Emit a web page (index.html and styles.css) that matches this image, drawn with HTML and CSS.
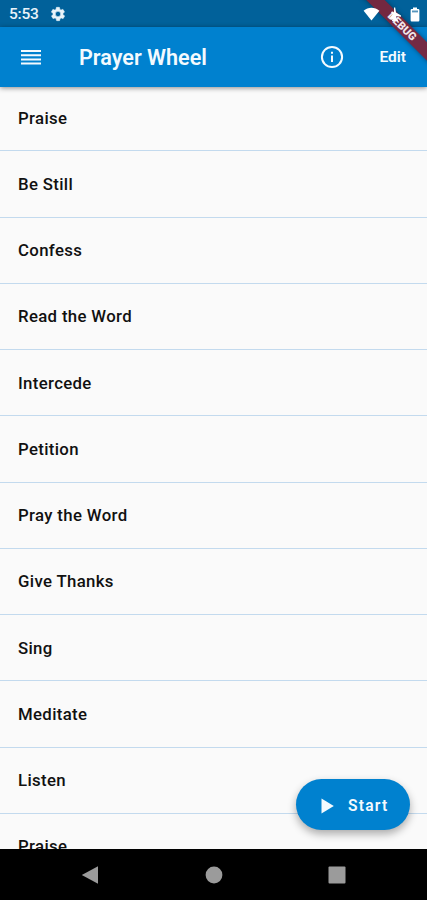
FILE: index.html
```
<!DOCTYPE html>
<html lang="en">
<head>
  <meta charset="UTF-8" />
  <meta name="viewport" content="width=device-width, initial-scale=1.0"/>
  <title>Prayer Wheel</title>
  <link rel="stylesheet" href="styles.css">
</head>
<body>

  <div class="screen">
    <!-- Status bar -->
    <div class="status-bar">
      <span class="clock">5:53</span>
      <svg class="gear" width="16" height="16" viewBox="0 0 24 24" fill="currentColor" stroke="currentColor" stroke-width=".8">
        <path fill-rule="evenodd" d="M19.4 13c.1-.3.1-.7.1-1s0-.7-.1-1l2.100-1.600c.2-.2.2-.4.100-.6l-2-3.500c-.1-.2-.4-.3-.6-.2l-2.500 1c-.5-.4-1.100-.7-1.700-1l-.4-2.600c0-.3-.2-.5-.5-.5h-4c-.2 0-.5.2-.5.4l-.4 2.700c-.6.200-1.100.600-1.700 1l-2.500-1c-.2-.1-.5 0-.6.2l-2 3.500c-.1.200-.1.500.1.600L4.600 11c-.1.300-.1.700-.1 1s0 .7.100 1l-2.100 1.600c-.2.200-.2.400-.1.600l2 3.500c.1.200.4.300.6.200l2.500-1c.5.400 1.100.700 1.700 1l.4 2.600c0 .3.300.5.500.5h4c.2 0 .5-.2.500-.4l.4-2.700c.6-.2 1.100-.6 1.700-1l2.500 1c.2.100.5 0 .6-.2l2-3.500c.1-.2.100-.5-.1-.6zM12 8a4 4 0 1 0 0 8a4 4 0 1 0 0-8z"/>
      </svg>
      <div class="status-icons">
        <svg width="17" height="14" viewBox="0 0 17 14" fill="currentColor">
          <path d="M8.500 13.500L.6 3.800C5-.3 12-.3 16.400 3.800z"/>
        </svg>
        <svg width="14" height="15" viewBox="0 0 14 15" fill="currentColor">
          <path d="M6 .5H7.200L8 5.500L13 8.500V9.800L8.300 9V11.500L10 13.200V14H4V13.200L5.300 12L2 11.800V10.500L4.500 7.500L3 5L4.500 4.500L6 6z"/>
        </svg>
        <svg width="10" height="15" viewBox="0 0 10 15">
          <path fill="currentColor" d="M3 .5H7V2H8.300Q9.400 2 9.400 3.200V13.300Q9.400 14.500 8.300 14.500H1.700Q.6 14.500 .6 13.300V3.200Q.6 2 1.700 2H3z"/>
          <path fill="#5796bd" d="M2 3.500H8V5.400H2z"/>
        </svg>
      </div>
    </div>

    <!-- App bar -->
    <header class="app-bar">
      <svg class="menu-icon" width="20" height="15" viewBox="0 0 20 15" fill="currentColor">
        <path d="M0 0H20V2H0zM0 4.200H20V6.200H0zM0 8.400H20V10.400H0zM0 12.600H20V14.600H0z"/>
      </svg>
      <h1>Prayer Wheel</h1>
      <svg class="info-icon" width="24" height="24" viewBox="0 0 24 24">
        <circle cx="12" cy="12" r="10.100" fill="none" stroke="currentColor" stroke-width="2"/>
        <path fill="currentColor" d="M11 6.800H13V8.800H11zM11 10.500H13V17H11z"/>
      </svg>
      <span class="edit">Edit</span>
    </header>

    <!-- Prayer steps -->
    <ul class="steps">
      <li>Praise</li>
      <li>Be Still</li>
      <li>Confess</li>
      <li>Read the Word</li>
      <li>Intercede</li>
      <li>Petition</li>
      <li>Pray the Word</li>
      <li>Give Thanks</li>
      <li>Sing</li>
      <li>Meditate</li>
      <li>Listen</li>
      <li>Praise</li>
    </ul>

    <!-- System navigation -->
    <nav class="nav-bar">
      <svg width="18" height="20" viewBox="0 0 18 20" fill="currentColor"><path d="M.8 10L17 1.200V18.800z"/></svg>
      <svg width="18" height="18" viewBox="0 0 18 18" fill="currentColor"><circle cx="9" cy="9" r="8.400"/></svg>
      <svg width="18" height="18" viewBox="0 0 18 18" fill="currentColor"><rect x=".5" y=".5" width="17" height="17" rx="1"/></svg>
    </nav>

    <button class="start-btn">
      <svg width="13" height="16" viewBox="0 0 13 16" fill="currentColor"><path d="M.5.5L12.800 8L.5 15.500z"/></svg>
      <span>Start</span>
    </button>

    <div class="debug-banner">DEBUG</div>
  </div>

</body>
</html>
```
FILE: styles.css
```
body {
  font-family: Roboto, sans-serif;
  margin: 0;
  background: #fafafa;
}

.screen {
  position: relative;
  display: flex;
  flex-direction: column;
  height: 900px;
  overflow: hidden;
}

.status-bar {
  display: flex;
  align-items: center;
  flex-shrink: 0;
  box-sizing: border-box;
  height: 27px;
  padding: 1px 7px 0 9px;
  background: #01619a;
  color: #e9f3f9;
}

.clock {
  width: 41px;
  font-size: 15.5px;
  font-weight: 500;
  letter-spacing: -0.2px;
}

/* system icons are drawn over the debug banner */
.status-icons {
  position: relative;
  z-index: 3;
  display: flex;
  align-items: center;
  gap: 8px;
  margin-left: auto;
  color: #fff;
}

.app-bar {
  position: relative;
  z-index: 1;
  display: flex;
  align-items: center;
  flex-shrink: 0;
  box-sizing: border-box;
  height: 60px;
  padding: 0 21px;
  background: #0081cf;
  color: #f4fafe;
  box-shadow: 0 1px 5px rgba(0, 0, 0, 0.45);
}

.app-bar h1 {
  flex: 1;
  margin: 1px 0 0 38px;
  font-size: 21.6px;
  font-weight: 600;
}

.edit {
  margin-left: 35px;
  font-size: 15.5px;
  font-weight: 600;
}

/* first row starts slightly under the app bar */
.steps {
  flex: 1;
  min-height: 0;
  overflow: hidden;
  margin: -2px 0 0;
  padding: 0;
  list-style: none;
}

.steps li {
  display: flex;
  align-items: center;
  box-sizing: border-box;
  height: 66.25px;
  padding: 0 18px;
  border-bottom: 1.5px solid #c3daee;
  color: #111;
  font-size: 16.8px;
  font-weight: 500;
  letter-spacing: 0.34px;
}

.nav-bar {
  display: flex;
  align-items: center;
  justify-content: space-between;
  flex-shrink: 0;
  box-sizing: border-box;
  height: 51px;
  padding: 0 81px;
  background: #000;
  color: #9b9b9b;
}

.start-btn {
  position: absolute;
  right: 17px;
  bottom: 70px;
  display: flex;
  align-items: center;
  gap: 14px;
  width: 114px;
  height: 51px;
  padding: 2px 0 0 25px;
  border: none;
  border-radius: 26px;
  background: #0081cf;
  color: #f4fafe;
  box-shadow: 0 4px 8px rgba(0, 0, 0, 0.32);
  font-family: inherit;
  font-size: 15.6px;
  font-weight: 600;
  letter-spacing: 1.2px;
}

.debug-banner {
  position: absolute;
  z-index: 2;
  top: 19.5px;
  left: 341.5px;
  width: 120px;
  height: 13px;
  background: rgba(125, 36, 57, 0.93);
  color: #f1e6ea;
  box-shadow: 0 0 5px rgba(0, 0, 0, 0.4);
  font-size: 11px;
  font-weight: 900;
  line-height: 13px;
  text-align: center;
  transform: rotate(45deg);
}
```
